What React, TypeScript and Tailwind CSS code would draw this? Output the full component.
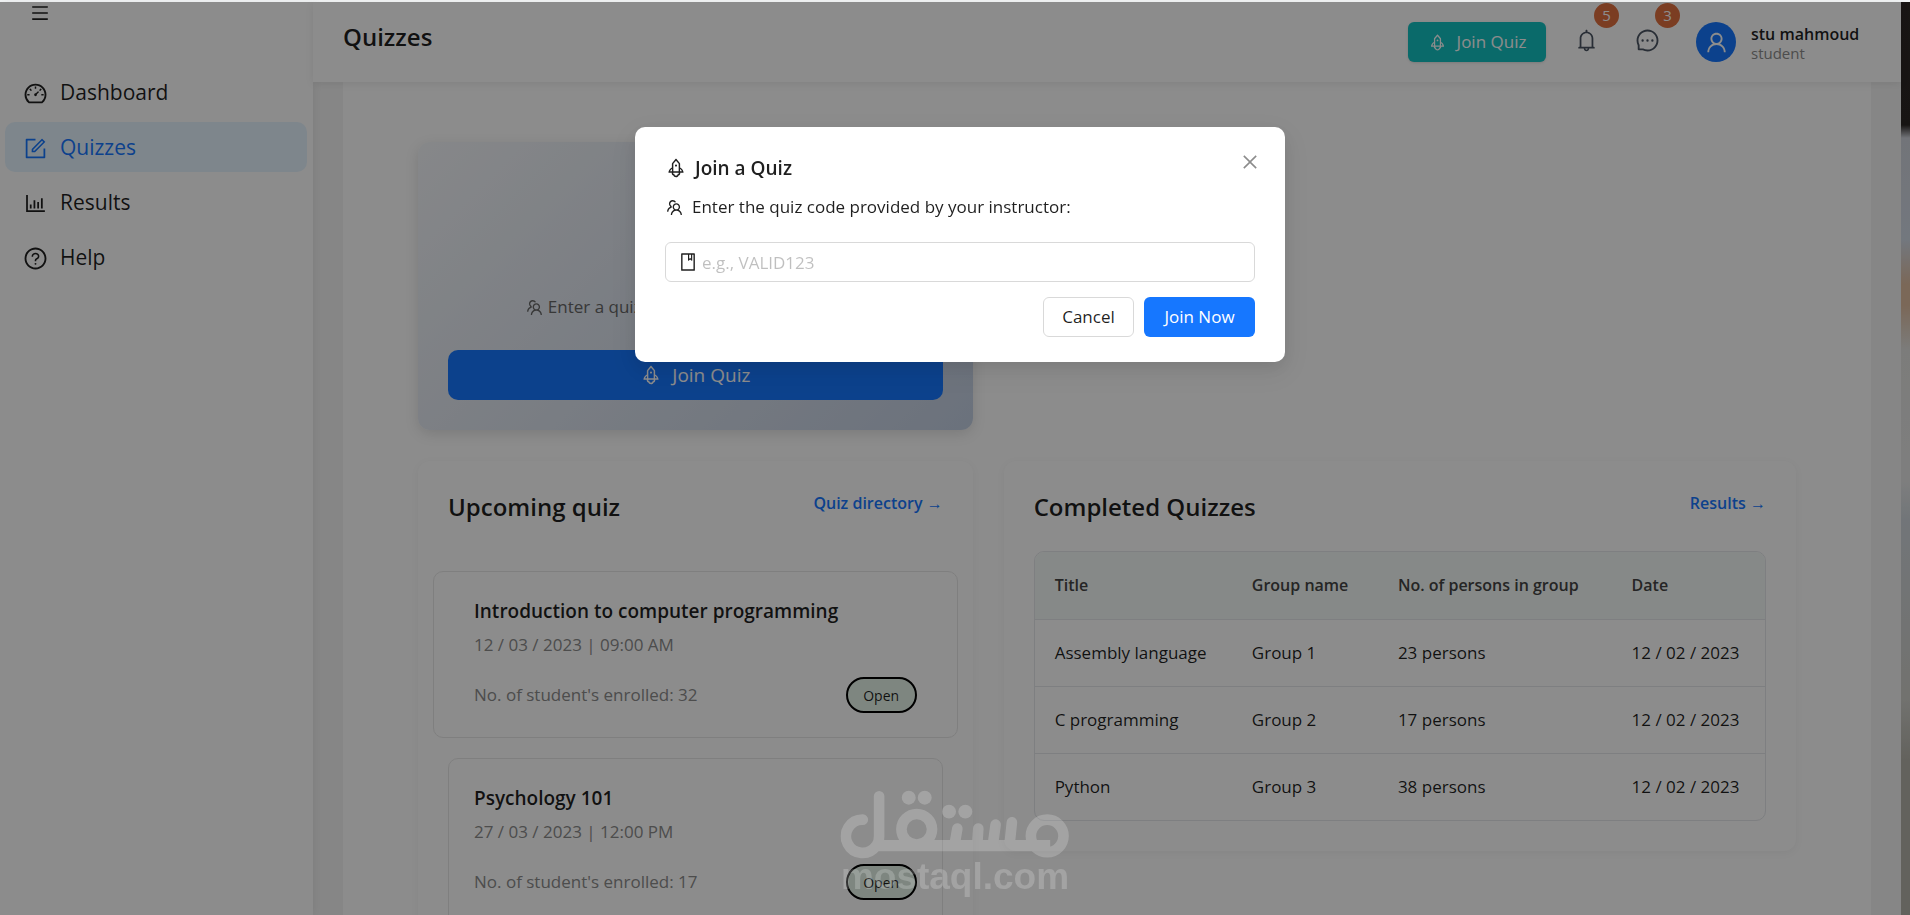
import { Dialog, DialogPanel, DialogTitle } from '@headlessui/react'
import clsx from 'clsx'
import { useState } from 'react'
import type { IconType } from 'react-icons'
import {
  AiOutlineBarChart,
  AiOutlineBell,
  AiOutlineBook,
  AiOutlineClose,
  AiOutlineDashboard,
  AiOutlineForm,
  AiOutlineMenu,
  AiOutlineMessage,
  AiOutlineQuestionCircle,
  AiOutlineRocket,
  AiOutlineTeam,
  AiOutlineUser,
} from 'react-icons/ai'

const NAV: { label: string; icon: IconType }[] = [
  { label: 'Dashboard', icon: AiOutlineDashboard },
  { label: 'Quizzes', icon: AiOutlineForm },
  { label: 'Results', icon: AiOutlineBarChart },
  { label: 'Help', icon: AiOutlineQuestionCircle },
]

const UPCOMING = [
  { title: 'Introduction to computer programming', date: '12 / 03 / 2023 | 09:00 AM', enrolled: 32 },
  { title: 'Psychology 101', date: '27 / 03 / 2023 | 12:00 PM', enrolled: 17 },
]

const COMPLETED = [
  { title: 'Assembly language', group: 'Group 1', persons: 23, date: '12 / 02 / 2023' },
  { title: 'C programming', group: 'Group 2', persons: 17, date: '12 / 02 / 2023' },
  { title: 'Python', group: 'Group 3', persons: 38, date: '12 / 02 / 2023' },
]

const Sidebar = () => {
  return (
    <aside className="z-10 w-[313px] shrink-0 bg-white shadow-[2px_0_8px_rgba(0,0,0,0.06)]">
      <button aria-label="Toggle menu" className="mt-px ml-[30px] block">
        <AiOutlineMenu size={20} />
      </button>
      <nav className="mt-11 flex flex-col gap-[5px] pr-1.5 pl-[5px]">
        {NAV.map(({ label, icon: Icon }) => (
          <a
            key={label}
            href="#"
            className={clsx(
              'flex h-[50px] items-center gap-3 rounded-[10px] pt-0.5 pl-[18px] text-[21px]',
              label === 'Quizzes' && 'bg-[#e6f4ff] text-[#1677ff]'
            )}
          >
            <Icon size={25} />
            {label}
          </a>
        ))}
      </nav>
    </aside>
  )
}

const IconBadge = ({ icon: Icon, label, count }: { icon: IconType; label: string; count: number }) => {
  return (
    <button aria-label={label} className="relative mb-1 text-[#4b5563]">
      <Icon size={25} />
      <span className="absolute -top-[25px] left-5 flex size-[25px] items-center justify-center rounded-full bg-[#e0703f] text-[15px] text-white">
        {count}
      </span>
    </button>
  )
}

const Header = ({ onJoin }: { onJoin: () => void }) => {
  return (
    <header className="z-10 flex h-20 shrink-0 items-center justify-between bg-white pr-10 pl-[30px] shadow-[0_2px_8px_rgba(0,0,0,0.08)]">
      <h1 className="pb-2.5 text-2xl font-semibold">Quizzes</h1>
      <div className="flex items-center gap-9">
        <button
          onClick={onJoin}
          className="-mr-2 flex h-10 w-[138px] items-center justify-center gap-2.5 rounded-md bg-[#13c2c2] text-[17px] text-white shadow-sm"
        >
          <AiOutlineRocket size={19} />
          Join Quiz
        </button>
        <IconBadge icon={AiOutlineBell} label="Notifications" count={5} />
        <IconBadge icon={AiOutlineMessage} label="Messages" count={3} />
        <div className="flex items-center gap-[15px]">
          <span className="flex size-10 items-center justify-center rounded-full bg-[#1677ff] text-white">
            <AiOutlineUser size={25} />
          </span>
          <div className="w-[110px] pt-0.5 whitespace-nowrap">
            <div className="text-[16px]/5 font-semibold">stu mahmoud</div>
            <div className="text-[15px]/[18px] text-[#8c8c8c]">student</div>
          </div>
        </div>
      </div>
    </header>
  )
}

const JoinCard = ({ onJoin }: { onJoin: () => void }) => {
  return (
    <section className="flex flex-col items-center rounded-xl bg-linear-135 from-[#f5f7fa] to-[#c3cfe2] p-[30px] shadow-[0_4px_14px_rgba(0,0,0,0.12)]">
      <AiOutlineRocket size={60} className="text-[#1677ff]" />
      <h2 className="mt-0.5 text-2xl/9 font-semibold">Join Quiz</h2>
      <p className="mt-[23px] flex items-center gap-1 text-[17px]/7 text-[#666]">
        <AiOutlineTeam size={19} />
        Enter a quiz code to join an existing quiz
      </p>
      <button
        onClick={onJoin}
        className="mt-[29px] flex h-[50px] w-full items-center justify-center gap-2.5 rounded-[10px] bg-[#1677ff] text-[19px] text-white"
      >
        <AiOutlineRocket size={22} />
        Join Quiz
      </button>
    </section>
  )
}

const CardHeader = ({ title, link }: { title: string; link: string }) => {
  return (
    <div className="flex items-start justify-between">
      <h2 className="text-2xl/8 font-semibold">{title}</h2>
      <a href="#" className="text-[16px]/6 font-semibold text-[#1677ff]">
        {link} →
      </a>
    </div>
  )
}

const UpcomingCard = () => {
  return (
    <section className="rounded-xl bg-white p-[30px] shadow-[0_2px_8px_rgba(0,0,0,0.05)]">
      <CardHeader title="Upcoming quiz" link="Quiz directory" />
      <ul className="mt-12 space-y-5">
        {UPCOMING.map((quiz, i) => (
          <li
            key={quiz.title}
            className={clsx('rounded-[10px] border border-[#e8e8e8] py-6', i === 0 ? '-mx-[15px] px-10' : 'px-[25px]')}
          >
            <h3 className="text-[19px]/[30px] font-semibold">{quiz.title}</h3>
            <p className="mt-[5px] text-[17px]/7 text-[#8c8c8c]">{quiz.date}</p>
            <div className="mt-[18px] flex items-center justify-between">
              <span className="text-[17px]/7 text-[#8c8c8c]">No. of student's enrolled: {quiz.enrolled}</span>
              <button className="h-9 w-[71px] rounded-full border-2 border-black bg-[#e6f4ea] text-[14px]">Open</button>
            </div>
          </li>
        ))}
      </ul>
    </section>
  )
}

const CompletedCard = () => {
  return (
    <section className="rounded-xl bg-white p-[30px] shadow-[0_2px_8px_rgba(0,0,0,0.05)]">
      <CardHeader title="Completed Quizzes" link="Results" />
      <div className="mt-7 overflow-hidden rounded-[10px] border border-[#e5e7eb]">
        <table className="w-full table-fixed text-left text-[17px]/6">
          <colgroup>
            <col className="w-[27%]" />
            <col className="w-[20%]" />
            <col className="w-[32%]" />
            <col />
          </colgroup>
          <thead className="bg-[#f5faf7] text-[#444]">
            <tr className="h-[67px]">
              {['Title', 'Group name', 'No. of persons in group', 'Date'].map((name) => (
                <th key={name} className="pl-5 text-[16px] font-semibold whitespace-nowrap">
                  {name}
                </th>
              ))}
            </tr>
          </thead>
          <tbody>
            {COMPLETED.map((row) => (
              <tr key={row.title} className="h-[67px] border-t border-[#e5e7eb]">
                <td className="pl-5">{row.title}</td>
                <td className="pl-5">{row.group}</td>
                <td className="pl-5">{row.persons} persons</td>
                <td className="pl-5 whitespace-nowrap">{row.date}</td>
              </tr>
            ))}
          </tbody>
        </table>
      </div>
    </section>
  )
}

const JoinDialog = ({ open, onClose }: { open: boolean; onClose: () => void }) => {
  const [code, setCode] = useState('')

  return (
    <Dialog
      open={open}
      onClose={onClose}
      className="relative z-20 font-['Open_Sans',sans-serif] text-black/88"
    >
      <div className="fixed inset-0 top-0.5 flex items-start justify-center bg-black/45 pt-[125px] pl-2.5">
        <DialogPanel className="relative w-[650px] rounded-[10px] bg-white px-[30px] py-[25px] shadow-[0_6px_16px_rgba(0,0,0,0.08),0_9px_28px_8px_rgba(0,0,0,0.05)]">
          <button
            aria-label="Close"
            onClick={onClose}
            className="absolute top-[25px] right-[25px] flex size-5 items-center justify-center text-black/45"
          >
            <AiOutlineClose size={20} />
          </button>
          <DialogTitle className="flex items-center gap-2 text-[19px]/8 font-semibold">
            <AiOutlineRocket size={22} />
            Join a Quiz
          </DialogTitle>
          <label htmlFor="quiz-code" className="mt-[9px] flex items-center gap-2 text-[17px]/7">
            <AiOutlineTeam size={19} />
            Enter the quiz code provided by your instructor:
          </label>
          <div className="mt-[21px] flex h-10 items-center gap-1 rounded-md border border-[#d9d9d9] px-3">
            <AiOutlineBook size={20} className="shrink-0" />
            <input
              id="quiz-code"
              value={code}
              onChange={(e) => setCode(e.target.value)}
              placeholder="e.g., VALID123"
              className="h-full min-w-0 flex-1 text-[17px] outline-none placeholder:text-black/25"
            />
          </div>
          <div className="mt-[15px] flex justify-end gap-2.5 text-[17px]">
            <button onClick={onClose} className="h-10 w-[91px] rounded-md border border-[#d9d9d9] bg-white">
              Cancel
            </button>
            <button onClick={onClose} className="h-10 w-[111px] rounded-md bg-[#1677ff] text-white">
              Join Now
            </button>
          </div>
        </DialogPanel>
      </div>
      <Watermark />
    </Dialog>
  )
}

const Watermark = () => {
  return (
    <div className="pointer-events-none fixed bottom-5 left-1/2 w-[229px] -translate-x-1/2 text-white opacity-20">
      <svg viewBox="60 62 688 206" className="block w-full" fill="none" stroke="currentColor" strokeWidth="32">
        <path d="M127 151a50 50 0 1 0 40 79C174 222 176 214 176 200V81" strokeLinecap="round" />
        <path d="M160 229H690" strokeWidth="34" />
        <circle cx="289" cy="180" r="46" />
        <circle cx="681" cy="200" r="49" />
        <path d="M411 178L403 225M474 178L471 225M526 166L518 225M575 159L568 225" strokeLinecap="round" />
        <g fill="currentColor" stroke="none">
          <circle cx="265" cy="85" r="21" />
          <circle cx="313" cy="85" r="21" />
          <circle cx="386" cy="127" r="21" />
          <circle cx="435" cy="127" r="21" />
        </g>
      </svg>
      <div className="flex justify-center font-['Liberation_Sans',sans-serif] text-[37px]/9 font-bold">
        mostaql.com
      </div>
    </div>
  )
}

export default function App() {
  const [showModal, setShowModal] = useState(true)

  return (
    <div className="flex h-screen flex-col overflow-hidden bg-[linear-gradient(to_bottom,#2e2826_0,#2b2624_125px,#d0d4dc_138px,#d2dae6_240px,#e0bda0_285px,#e0bda0_305px,#e2e2e0_350px,#e6e6e6_480px,#cfd6dc_520px,#cfcfca_700px,#b5b3aa_760px)] font-['Open_Sans',sans-serif] text-black/88">
      <div className="h-0.5 shrink-0 bg-[#f1f3f4]" />
      <div className="mr-[9px] flex min-h-0 flex-1 bg-[#f5f5f5]">
        <Sidebar />
        <div className="flex min-w-0 flex-1 flex-col">
          <Header onJoin={() => setShowModal(true)} />
          <main className="mx-[30px] grid flex-1 grid-cols-[7fr_10fr] items-start gap-[31px] overflow-hidden bg-white px-[75px] pt-[60px]">
            <JoinCard onJoin={() => setShowModal(true)} />
            <div />
            <UpcomingCard />
            <CompletedCard />
          </main>
        </div>
      </div>
      <JoinDialog open={showModal} onClose={() => setShowModal(false)} />
    </div>
  )
}
